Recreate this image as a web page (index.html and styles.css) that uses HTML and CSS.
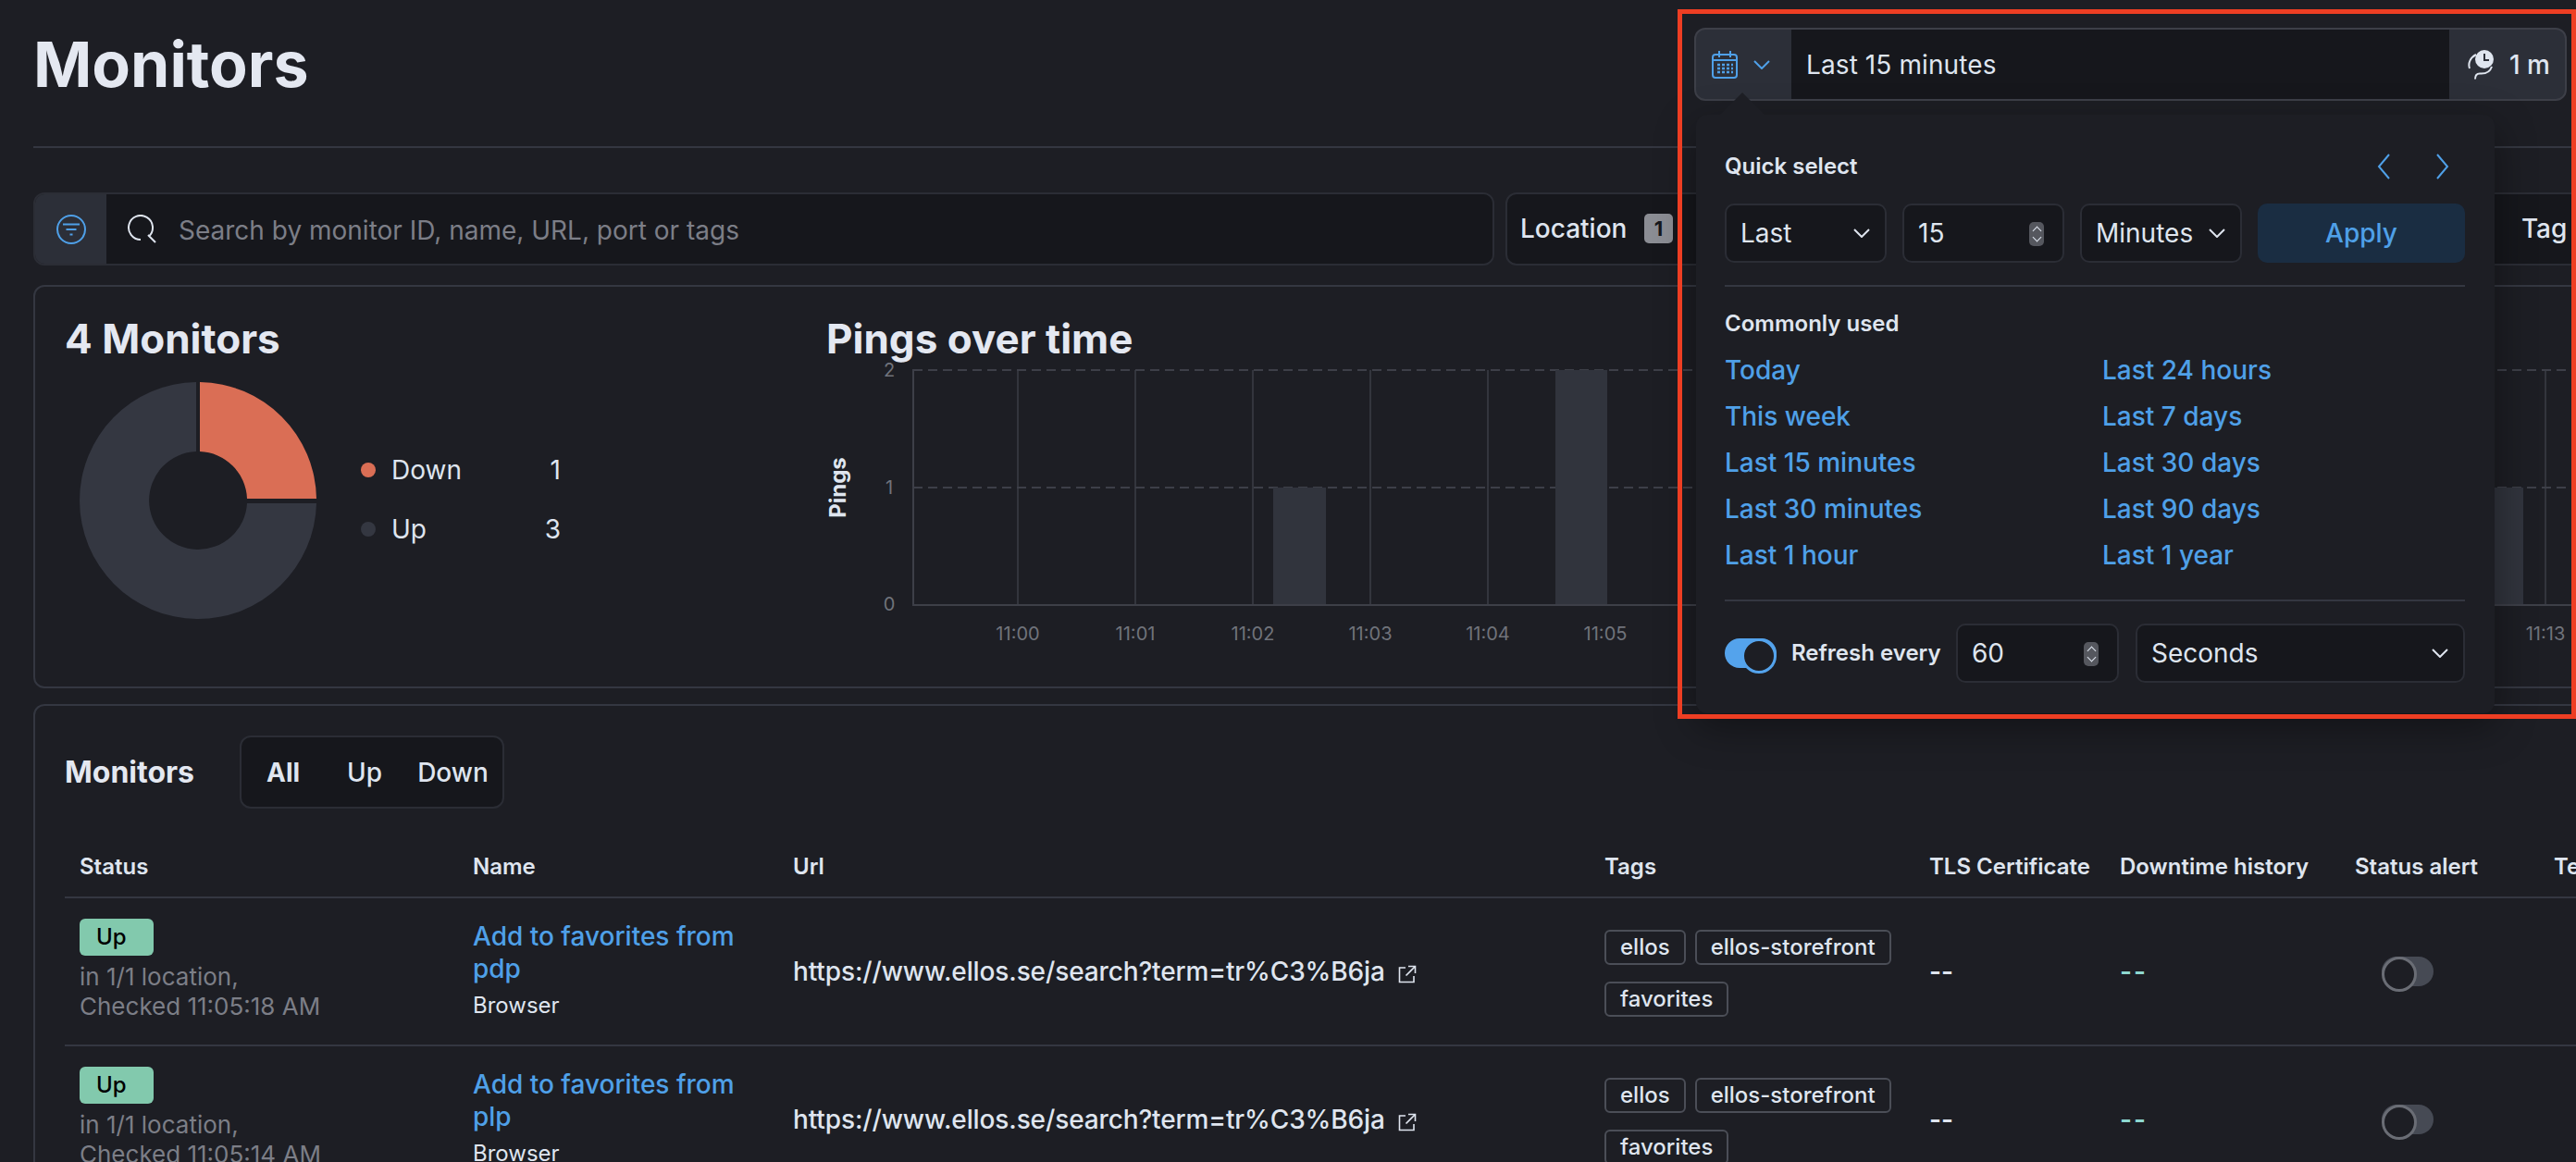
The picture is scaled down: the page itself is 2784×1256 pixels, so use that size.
FILE: index.html
```html
<!DOCTYPE html>
<html>
	<head>
		<meta charset="UTF-8">
		<title>Monitors</title>
		<link rel="stylesheet" href="styles.css">
	</head>
	<body>
		<svg class="sprite" width="0" height="0">
			<symbol id="chev" viewBox="0 0 18 10"><path d="M1 1l8 8 8-8" fill="none" stroke="currentColor" stroke-width="2"/></symbol>
		</svg>

		<div class="page">
			<!-- header -->
			<div class="header">
				<h1>Monitors</h1>
				<div class="datebar">
					<div class="date-prepend">
						<svg class="ico-cal" width="28" height="30" viewBox="0 0 28 30" fill="none" stroke="currentColor" stroke-width="2">
							<rect x="1" y="4" width="26" height="25" rx="3"/>
							<path d="M1 10h26M8 0v7M20 0v7"/>
							<path stroke-width="2.4" stroke-dasharray="3 2" d="M6 15h17M6 19h17M6 23h17"/>
						</svg>
						<svg class="ico-chev" width="18" height="10"><use href="#chev"/></svg>
					</div>
					<div class="date-input">Last 15 minutes</div>
					<div class="date-append">
						<svg width="28" height="33" viewBox="0 0 28 33" fill="none">
							<circle cx="18" cy="11" r="10" fill="#dfe5ef"/>
							<path d="M18 5v7h5" stroke="#2c2f38" stroke-width="2"/>
							<path d="M9 6C3 9 0 15 2 21M26 19c-2 6-7 8-13 7.500-3 0-5 1.500-5 6" stroke="#dfe5ef" stroke-width="2"/>
						</svg>
						<span>1 m</span>
					</div>
				</div>
			</div>
			<div class="rule"></div>

			<!-- search and filters -->
			<div class="searchrow">
				<div class="search">
					<div class="search-btn">
						<svg width="32" height="32" viewBox="0 0 32 32" fill="none" stroke="#4fa0e8" stroke-width="2">
							<circle cx="16" cy="16" r="15"/>
							<path d="M7 10.500h18M10.500 16h11M14.500 21.500h3"/>
						</svg>
					</div>
					<div class="search-input">
						<svg width="32" height="32" viewBox="0 0 32 32" fill="none" stroke="#dfe5ef" stroke-width="2">
							<path d="M15 27a13 13 0 1 1 9-3.600M23 22l8 8"/>
						</svg>
						<span>Search by monitor ID, name, URL, port or tags</span>
					</div>
				</div>
				<div class="filters">
					<div class="filter">Location <b>1</b></div>
					<div class="filter filter-tag">Tag</div>
				</div>
			</div>

			<!-- summary -->
			<div class="panel summary">
				<div class="summary-left">
					<h2>4 Monitors</h2>
					<div class="donut-row">
						<svg class="donut" width="258" height="258" viewBox="-129 -129 258 258">
							<path fill="#343741" d="M-2 -128A128 128 0 1 0 128 3H53A53 53 0 1 1 -2 -53Z"/>
							<path fill="#da6e55" d="M2 -128A128 128 0 0 1 128 -2H53A53 53 0 0 0 2 -53Z"/>
						</svg>
						<div class="legend">
							<div class="legend-item"><i class="dot dot-down"></i><span>Down</span><em>1</em></div>
							<div class="legend-item"><i class="dot dot-up"></i><span>Up</span><em>3</em></div>
						</div>
					</div>
				</div>
				<div class="summary-right">
					<h2 class="pings-title">Pings over time</h2>
					<svg class="chart" width="1894" height="340" viewBox="890 388 1894 340">
						<g class="grid">
							<path d="M1100 400V653M1227 400V653M1354 400V653M1481 400V653M1608 400V653M1735 400V653M1862 400V653M1989 400V653M2116 400V653M2243 400V653M2370 400V653M2497 400V653M2624 400V653M2751 400V653"/>
						</g>
						<path class="dash" d="M987 400H2784M987 527H2784"/>
						<rect class="bar" x="1376" y="527" width="57" height="127"/>
						<rect class="bar" x="1681" y="400" width="56" height="254"/>
						<rect class="bar" x="2670" y="527" width="57" height="127"/>
						<path class="axis" d="M987 399V654H2784"/>
						<g class="ylabels">
							<text x="961" y="407">2</text>
							<text x="961" y="534">1</text>
							<text x="961" y="660">0</text>
						</g>
						<g class="xlabels">
							<text x="1100" y="692">11:00</text>
							<text x="1227" y="692">11:01</text>
							<text x="1354" y="692">11:02</text>
							<text x="1481" y="692">11:03</text>
							<text x="1608" y="692">11:04</text>
							<text x="1735" y="692">11:05</text>
							<text x="2751" y="692">11:13</text>
						</g>
						<text class="ytitle" transform="translate(906 527) rotate(-90)" y="8">Pings</text>
					</svg>
				</div>
			</div>

			<!-- monitor table -->
			<div class="panel list">
				<div class="toolbar">
					<h3>Monitors</h3>
					<div class="segment">
						<span class="on">All</span>
						<span>Up</span>
						<span>Down</span>
					</div>
				</div>
				<table>
					<thead>
						<tr>
							<th class="c-status">Status</th>
							<th class="c-name">Name</th>
							<th class="c-url">Url</th>
							<th class="c-tags">Tags</th>
							<th class="c-tls">TLS Certificate</th>
							<th class="c-down">Downtime history</th>
							<th class="c-alert">Status alert</th>
							<th class="c-test">Test now</th>
						</tr>
					</thead>
					<tbody>
						<tr>
							<td class="up-cell">
								<div class="badge">Up</div>
								<div class="checked">in 1/1 location,<br>Checked 11:05:18 AM</div>
							</td>
							<td class="up-cell">
								<a class="mon-link">Add to favorites from pdp</a>
								<div class="mon-type">Browser</div>
							</td>
							<td>
								<span class="url">https://www.ellos.se/search?term=tr%C3%B6ja</span>
								<svg class="ext" width="20" height="20" viewBox="0 0 20 20" fill="none" stroke="currentColor" stroke-width="1.600"><path d="M8 3H1.500v15.500H17V12M11 1.500h7.500V9M18 2L8.500 11.500"/></svg>
							</td>
							<td class="down-cell">
								<div class="tags"><span>ellos</span><span>ellos-storefront</span><span>favorites</span></div>
							</td>
							<td><span class="none">--</span></td>
							<td><span class="none teal">--</span></td>
							<td><div class="switch"></div></td>
							<td></td>
						</tr>
						<tr>
							<td class="up-cell">
								<div class="badge">Up</div>
								<div class="checked">in 1/1 location,<br>Checked 11:05:14 AM</div>
							</td>
							<td class="up-cell">
								<a class="mon-link">Add to favorites from plp</a>
								<div class="mon-type">Browser</div>
							</td>
							<td>
								<span class="url">https://www.ellos.se/search?term=tr%C3%B6ja</span>
								<svg class="ext" width="20" height="20" viewBox="0 0 20 20" fill="none" stroke="currentColor" stroke-width="1.600"><path d="M8 3H1.500v15.500H17V12M11 1.500h7.500V9M18 2L8.500 11.500"/></svg>
							</td>
							<td class="down-cell">
								<div class="tags"><span>ellos</span><span>ellos-storefront</span><span>favorites</span></div>
							</td>
							<td><span class="none">--</span></td>
							<td><span class="none teal">--</span></td>
							<td><div class="switch"></div></td>
							<td></td>
						</tr>
					</tbody>
				</table>
			</div>
		</div>

		<!-- quick select popover -->
		<div class="popover">
			<div class="pop-head">
				<strong>Quick select</strong>
				<div class="pop-arrows">
					<svg width="14" height="28" viewBox="0 0 14 28" fill="none" stroke="#4fa0e8" stroke-width="2"><path d="M13 1L2 14l11 13"/></svg>
					<svg width="14" height="28" viewBox="0 0 14 28" fill="none" stroke="#4fa0e8" stroke-width="2"><path d="M1 1l11 13L1 27"/></svg>
				</div>
			</div>
			<div class="pop-controls">
				<div class="field">Last<svg width="18" height="10"><use href="#chev"/></svg></div>
				<div class="field">15<i class="spin"></i></div>
				<div class="field">Minutes<svg width="18" height="10"><use href="#chev"/></svg></div>
				<div class="apply">Apply</div>
			</div>
			<div class="pop-rule"></div>
			<strong class="pop-sub">Commonly used</strong>
			<div class="pop-links">
				<a>Today</a><a>Last 24 hours</a>
				<a>This week</a><a>Last 7 days</a>
				<a>Last 15 minutes</a><a>Last 30 days</a>
				<a>Last 30 minutes</a><a>Last 90 days</a>
				<a>Last 1 hour</a><a>Last 1 year</a>
			</div>
			<div class="pop-rule rule-low"></div>
			<div class="pop-refresh">
				<div class="switch-on"></div>
				<strong>Refresh every</strong>
				<div class="field">60<i class="spin"></i></div>
				<div class="field field-wide">Seconds<svg width="18" height="10"><use href="#chev"/></svg></div>
			</div>
		</div>

		<!-- annotation -->
		<div class="redframe"></div>
	</body>
</html>
```

FILE: styles.css
```css
*{
	margin: 0;
	padding: 0;
	box-sizing: border-box;
}
html, body{
	width: 2784px;
	height: 1256px;
	overflow: hidden;
}
body{
	position: relative;
	background-color: #1d1e24;
	color: #dfe5ef;
	font-family: "Inter", "Liberation Sans", sans-serif;
	font-size: 28px;
}
.sprite{
	position: absolute;
}
.page{
	width: 3100px;
	height: 1256px;
	padding: 30px 0 0 36px;
	overflow: hidden;
}

/* header */
.header{
	width: 2738px;
	height: 79px;
	display: flex;
	align-items: center;
	justify-content: space-between;
}
h1{
	font-size: 68px;
	font-weight: 700;
	line-height: 79px;
	color: #e4e8f1;
}
.datebar{
	width: 943px;
	height: 79px;
	display: flex;
	border: 2px solid #3d3f48;
	border-radius: 12px;
	overflow: hidden;
	background-color: #2c2f38;
}
.date-prepend{
	width: 103px;
	display: flex;
	align-items: center;
	gap: 17px;
	padding-left: 17px;
	color: #4fa0e8;
}
.date-input{
	flex: 1;
	background-color: #16171c;
	line-height: 76px;
	padding-left: 16px;
	letter-spacing: .1px;
}
.date-append{
	width: 125px;
	display: flex;
	align-items: center;
	gap: 17px;
	padding-left: 20px;
	font-weight: 500;
}
.rule{
	width: 2900px;
	height: 2px;
	margin-top: 49px;
	background-color: #343741;
}

/* search */
.searchrow{
	display: flex;
	gap: 12px;
	margin-top: 48px;
	height: 79px;
}
.search{
	width: 1579px;
	display: flex;
	border: 2px solid #2b2d35;
	border-radius: 12px;
	overflow: hidden;
}
.search-btn{
	width: 77px;
	display: flex;
	align-items: center;
	justify-content: center;
	background-color: #2c2f38;
}
.search-input{
	flex: 1;
	display: flex;
	align-items: center;
	gap: 24px;
	padding-left: 22px;
	background-color: #16171c;
	color: #7c7e87;
}
.search-input span{
	padding-top: 2px;
}
.filters{
	width: 1300px;
	display: flex;
	background-color: #16171c;
	border: 2px solid #2b2d35;
	border-radius: 12px;
}
.filter{
	padding: 0 14px;
	line-height: 75px;
	font-weight: 500;
}
.filter b{
	display: inline-block;
	width: 31px;
	height: 32px;
	margin-left: 11px;
	border-radius: 5px;
	background-color: #8b8d94;
	color: #16171c;
	font-size: 22px;
	line-height: 32px;
	text-align: center;
	vertical-align: 2px;
}
.filter-tag{
	margin-left: 889px;
}

/* panels */
.panel{
	width: 2900px;
	border: 2px solid #343741;
	border-radius: 12px;
	background-color: #1d1e24;
}
.summary{
	height: 436px;
	margin-top: 21px;
	padding: 32px 0 0 32px;
	display: flex;
}
.summary-left{
	width: 820px;
}
h2{
	font-size: 44px;
	font-weight: 700;
	line-height: 48px;
	color: #e4e8f1;
}
.pings-title{
	padding-left: 3px;
}
.donut-row{
	display: flex;
	align-items: flex-start;
	margin: 22px 0 0 15px;
}
.legend{
	width: 216px;
	margin: 64px 0 0 47px;
}
.legend-item{
	height: 64px;
	display: flex;
	align-items: center;
}
.dot{
	width: 16px;
	height: 16px;
	border-radius: 50%;
	margin-right: 17px;
}
.dot-down{
	background-color: #da6e55;
}
.dot-up{
	background-color: #343741;
}
.legend-item em{
	margin-left: auto;
	font-style: normal;
}
.chart{
	display: block;
	margin-top: -2px;
}
.grid path{
	stroke: #33353d;
	stroke-width: 2;
	fill: none;
}
.dash{
	stroke: #3d3f48;
	stroke-width: 2;
	stroke-dasharray: 10 6;
	fill: none;
}
.bar{
	fill: #31343d;
}
.axis{
	stroke: #3d3f48;
	stroke-width: 2;
	fill: none;
}
.ylabels text{
	fill: #70737b;
	font-size: 20px;
	text-anchor: middle;
}
.xlabels text{
	fill: #70737b;
	font-size: 20px;
	text-anchor: middle;
}
.ytitle{
	fill: #dfe5ef;
	font-size: 24px;
	font-weight: 700;
	text-anchor: middle;
}

/* table */
.list{
	height: 600px;
	margin-top: 17px;
	padding: 32px 0 0 32px;
}
.toolbar{
	display: flex;
	align-items: center;
	gap: 49px;
	height: 79px;
}
h3{
	font-size: 32px;
	font-weight: 700;
	color: #e4e8f1;
}
.segment{
	width: 286px;
	height: 79px;
	display: flex;
	align-items: center;
	padding-left: 27px;
	background-color: #16171c;
	border: 2px solid #2b2d35;
	border-radius: 12px;
}
.segment span{
	font-weight: 500;
}
.segment span:nth-child(2){
	margin-left: 51px;
}
.segment span:nth-child(3){
	margin-left: 38px;
}
.segment .on{
	font-weight: 700;
}
table{
	width: 2840px;
	table-layout: fixed;
	border-collapse: collapse;
	margin-top: 30px;
}
th{
	height: 66px;
	padding-left: 16px;
	text-align: left;
	font-size: 24px;
	font-weight: 600;
	white-space: nowrap;
	overflow: hidden;
	border-bottom: 2px solid #343741;
}
.c-status{
	width: 425px;
}
.c-name{
	width: 346px;
}
.c-url{
	width: 877px;
}
.c-tags{
	width: 351px;
}
.c-tls{
	width: 206px;
}
.c-down{
	width: 254px;
}
.c-alert{
	width: 215px;
}
td{
	height: 160px;
	padding-left: 16px;
	vertical-align: middle;
	border-bottom: 2px solid #343741;
}
td.up-cell{
	padding-bottom: 3px;
}
td.down-cell{
	padding-top: 3px;
}
.badge{
	width: 80px;
	height: 40px;
	padding-left: 18px;
	border-radius: 6px;
	background-color: #82c9ad;
	color: #000;
	font-size: 24px;
	font-weight: 500;
	line-height: 40px;
}
.checked{
	margin-top: 7px;
	font-size: 26px;
	line-height: 32px;
	color: #7c7e87;
}
.mon-link{
	display: block;
	width: 300px;
	color: #4fa0e8;
	font-weight: 500;
	line-height: 35px;
}
.mon-type{
	margin-top: 6px;
	font-size: 24px;
	line-height: 32px;
}
.url{
	font-weight: 500;
	letter-spacing: -.12px;
}
.ext{
	margin-left: 6px;
	vertical-align: -3px;
	color: #dfe5ef;
}
.tags{
	display: flex;
	flex-wrap: wrap;
	gap: 18px 10px;
	width: 320px;
}
.tags span{
	height: 38px;
	padding: 0 15px;
	border: 2px solid #4b4e57;
	border-radius: 6px;
	font-size: 24px;
	font-weight: 500;
	line-height: 34px;
}
.none{
	font-weight: 600;
}
.teal{
	color: #8ed8d0;
	letter-spacing: 2px;
}
.switch{
	position: relative;
	width: 56px;
	height: 32px;
	margin-left: 29px;
	border-radius: 16px;
	background-color: #464a54;
}
.switch:after{
	content: "";
	position: absolute;
	left: 0;
	top: 0;
	width: 32px;
	height: 32px;
	border: 3px solid #6a6d75;
	border-radius: 50%;
	background-color: #1d1e24;
}

/* popover */
.popover{
	position: absolute;
	left: 1833px;
	top: 124px;
	width: 863px;
	height: 647px;
	padding: 40px 32px 0 31px;
	background-color: #1d1e24;
	border-radius: 12px;
	box-shadow: 0 14px 44px rgba(0,0,0,.4);
}
.popover:before{
	content: "";
	position: absolute;
	left: 26px;
	top: -24px;
	border-left: 24px solid transparent;
	border-right: 24px solid transparent;
	border-bottom: 24px solid #1d1e24;
}
.popover strong{
	font-size: 24px;
	font-weight: 600;
	line-height: 32px;
}
.pop-head{
	display: flex;
	justify-content: space-between;
	align-items: center;
	height: 32px;
}
.pop-arrows{
	display: flex;
	gap: 50px;
	margin-right: 17px;
}
.pop-controls{
	display: flex;
	gap: 17px;
	margin-top: 24px;
}
.field{
	position: relative;
	width: 175px;
	height: 64px;
	display: flex;
	align-items: center;
	justify-content: space-between;
	padding: 0 16px 0 15px;
	background-color: #16171c;
	border: 2px solid #2b2d35;
	border-radius: 10px;
}
.apply{
	flex: 1;
	height: 64px;
	border-radius: 10px;
	background-color: #1a2d42;
	color: #4fa0e8;
	font-weight: 500;
	line-height: 64px;
	text-align: center;
}
.spin{
	position: absolute;
	right: 20px;
	top: 18px;
	width: 16px;
	height: 26px;
	border-radius: 5px;
	background-color: #55575e;
}
.spin:before, .spin:after{
	content: "";
	position: absolute;
	left: 5px;
	width: 6px;
	height: 6px;
	border-left: 1.5px solid #dfe5ef;
	border-top: 1.5px solid #dfe5ef;
}
.spin:before{
	top: 6px;
	transform: rotate(45deg);
}
.spin:after{
	bottom: 6px;
	transform: rotate(225deg);
}
.pop-rule{
	height: 2px;
	margin-top: 24px;
	background-color: #343741;
}
.rule-low{
	margin-top: 23px;
}
.pop-sub{
	display: block;
	margin-top: 24px;
}
.pop-links{
	display: grid;
	grid-template-columns: 408px 1fr;
	grid-auto-rows: 50px;
	margin-top: 9px;
}
.pop-links a{
	color: #4fa0e8;
	font-weight: 500;
	line-height: 50px;
}
.pop-refresh{
	display: flex;
	align-items: center;
	margin-top: 24px;
}
.switch-on{
	position: relative;
	width: 56px;
	height: 32px;
	border-radius: 16px;
	background-color: #54a3ec;
}
.switch-on:after{
	content: "";
	position: absolute;
	right: 0;
	top: 0;
	width: 32px;
	height: 32px;
	border: 3px solid #54a3ec;
	border-radius: 50%;
	background-color: #1d1e24;
}
.pop-refresh strong{
	width: 178px;
	margin-left: 16px;
	white-space: nowrap;
}
.pop-refresh .field{
	width: 176px;
}
.pop-refresh .field-wide{
	width: 356px;
	margin-left: 18px;
}

/* red outline on top */
.redframe{
	position: absolute;
	left: 1813px;
	top: 10px;
	width: 971px;
	height: 767px;
	border: 5px solid #ee3e23;
}
```
